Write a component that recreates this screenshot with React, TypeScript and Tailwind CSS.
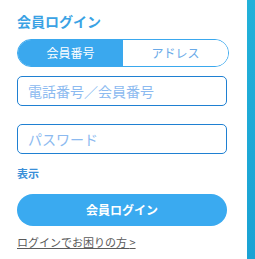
import * as React from "react";

const FONT = { fontFamily: '"Noto Sans CJK JP", "Noto Sans", sans-serif' };

export default function App() {
  const [mode, setMode] = React.useState<"member" | "address">("member");

  return (
    <div className="flex h-[259px] w-[255px] bg-white" style={FONT}>
      <div className="flex-1 pl-[17px]">
        <h2 className="mt-[11px] h-[20px] text-[14px] leading-[20px] font-bold text-[#3aa2e4]">会員ログイン</h2>

        {/* tab switch */}
        <div className="mt-[8px] flex h-[28px] w-[212px] overflow-hidden rounded-full border border-[#3aa8ee]">
          <button
            onClick={() => setMode("member")}
            className={`flex-1 text-[12px] leading-none ${mode === "member" ? "bg-[#3aa8ee] text-white" : "bg-white text-[#6aaae8]"}`}
          >
            会員番号
          </button>
          <button
            onClick={() => setMode("address")}
            className={`flex-1 text-[12px] leading-none ${mode === "address" ? "bg-[#3aa8ee] text-white" : "bg-white text-[#6aaae8]"}`}
          >
            アドレス
          </button>
        </div>

        <input
          className="mt-[9px] block h-[30px] w-[210px] rounded-[5px] border border-[#1f80d2] px-[10px] text-[14px] outline-none placeholder:text-[#8cbaf0]"
          placeholder="電話番号／会員番号"
        />
        <input
          type="password"
          className="mt-[18px] block h-[30px] w-[210px] rounded-[5px] border border-[#1f80d2] px-[10px] text-[14px] outline-none placeholder:text-[#8cbaf0]"
          placeholder="パスワード"
        />

        <div className="mt-[11px] h-[16px] text-[11px] leading-[16px] font-bold text-[#3a8fd8]">表示</div>

        <button className="mt-[13px] block h-[32px] w-[210px] rounded-full bg-[#3aaaf0] text-[12px] font-bold text-white">
          会員ログイン
        </button>

        <a href="#" className="mt-[8px] block h-[16px] text-[11px] leading-[16px] text-[#5a5a5a] underline">
          ログインでお困りの方{"\u00a0"}&gt;
        </a>
      </div>
      <div className="h-full w-[8px] bg-gradient-to-b from-[#22b1d9] to-[#1aa2d4]" />
    </div>
  );
}
